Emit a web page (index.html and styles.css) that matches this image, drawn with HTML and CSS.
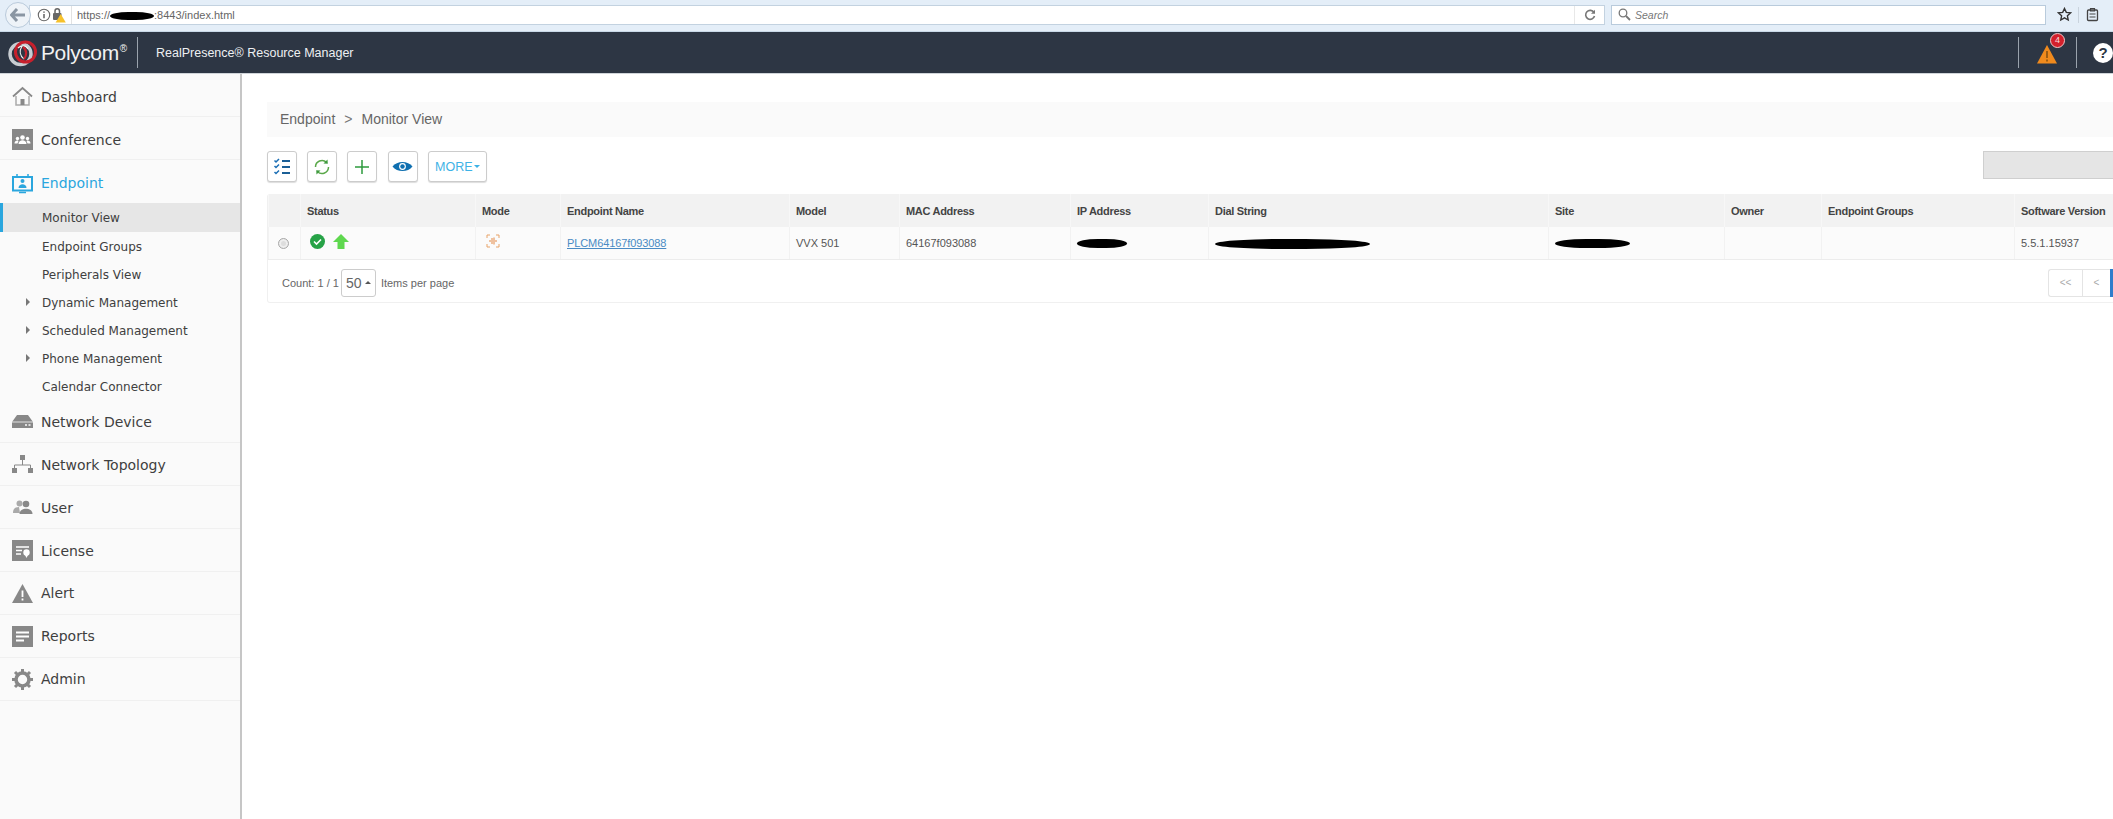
FILE: index.html
```html
<!DOCTYPE html>
<html lang="en">
<head>
<meta charset="utf-8">
<title>RealPresence Resource Manager</title>
<link rel="stylesheet" href="styles.css">
</head>
<body>
<div class="browser">
  <div class="back"><svg width="16" height="14" viewBox="0 0 16 14"><path d="M7 1 1.500 7 7 13M2 7h13" fill="none" stroke="#8a96a3" stroke-width="3"/></svg></div>
  <div class="urlbar">
    <svg class="info" width="14" height="14" viewBox="0 0 14 14"><circle cx="7" cy="7" r="5.700" fill="#fff" stroke="#666" stroke-width="1.100"/><path d="M7 6v4.200M7 3.400v1.400" stroke="#555" stroke-width="1.400"/></svg>
    <svg class="lock" width="14" height="16" viewBox="0 0 14 16"><rect x="1" y="6" width="8.500" height="7" rx="1" fill="#666"/><path d="M3 6V4a2.200 2.200 0 0 1 4.500 0v2" fill="none" stroke="#666" stroke-width="1.500"/><path d="M8.700 7 13.800 15.500H3.600Z" fill="#f6c12b"/></svg>
    <span class="urltext">https://<span class="blob blob-url"></span>:8443/index.html</span>
    <span class="reload"><svg width="12" height="12" viewBox="0 0 12 12"><path d="M10 3.500A4.500 4.500 0 1 0 10.500 7" fill="none" stroke="#777" stroke-width="1.600"/><path d="M11 .8v4H7Z" fill="#777"/></svg></span>
  </div>
  <div class="searchbar">
    <svg width="13" height="13" viewBox="0 0 13 13"><circle cx="5" cy="5" r="3.800" fill="none" stroke="#777" stroke-width="1.300"/><path d="m8 8 4 4" stroke="#777" stroke-width="1.800"/></svg>
    <span>Search</span>
  </div>
  <div class="browser-tools">
    <svg width="15" height="15" viewBox="0 0 15 15"><path d="m7.500 1.500 1.800 3.900 4.200.5-3.100 2.900.8 4.200-3.700-2.100-3.700 2.100.8-4.200L1.500 5.900l4.200-.5Z" fill="none" stroke="#333" stroke-width="1.400"/></svg>
    <i class="tool-div"></i>
    <svg width="13" height="15" viewBox="0 0 13 15"><rect x="1.500" y="3" width="10" height="10.500" rx="1" fill="none" stroke="#444" stroke-width="1.300"/><path d="M4.500 1.500h4V4h-4ZM3.500 7h6M3.500 10h6" fill="none" stroke="#444" stroke-width="1.200"/></svg>
  </div>
</div>

<header class="appbar">
  <svg class="logo" width="30" height="30" viewBox="0 0 30 30">
    <circle cx="12.500" cy="16" r="10.500" fill="none" stroke="#c9cdd2" stroke-width="3.500"/>
    <circle cx="17.500" cy="14" r="10" fill="none" stroke="#c8202c" stroke-width="3"/>
    <path d="M10 10c3-3 8-3 10 1M14 8c-3 5-2 10 2 13" fill="none" stroke="#f2f2f2" stroke-width="1.200"/>
    <path d="M15 9c4 3 4 8 1 12" fill="none" stroke="#c8202c" stroke-width="2.200"/>
  </svg>
  <span class="brand">Polycom<sup>®</sup></span>
  <i class="app-div app-div-first"></i>
  <span class="appname">RealPresence® Resource Manager</span>
  <div class="app-right">
    <i class="app-div"></i>
    <div class="alert-wrap">
      <svg width="22" height="20" viewBox="0 0 22 20"><path d="M11 1 21 19.500H1Z" fill="#f08a1d"/><path d="M11 7v7M11 15.500v2" stroke="#7a4a10" stroke-width="1.400"/></svg>
      <span class="badge">4</span>
    </div>
    <i class="app-div"></i>
    <span class="help">?</span>
  </div>
</header>

<div class="body">
  <nav class="side">
    <a class="nav-item nav-top"><svg class="nav-ic" viewBox="0 0 21 21"><path d="M1 10.500 10.500 2 20 10.500" fill="none" stroke="#888" stroke-width="1.800"/><path d="M4 10v9h13v-9" fill="none" stroke="#aaa" stroke-width="1.500"/><rect x="8.500" y="13" width="4" height="6" fill="#888"/></svg>Dashboard</a>
    <a class="nav-item nav-top"><svg class="nav-ic" viewBox="0 0 21 21"><rect width="21" height="21" fill="#888"/><circle cx="10.500" cy="8.500" r="2.300" fill="#fff"/><circle cx="5.500" cy="9.500" r="1.700" fill="#fff"/><circle cx="15.500" cy="9.500" r="1.700" fill="#fff"/><path d="M6.500 15c0-5 8-5 8 0ZM2.500 14.500c0-3 3-3.500 4-2.500l-1 2.500ZM18.500 14.500c0-3-3-3.500-4-2.500l1 2.500Z" fill="#fff"/></svg>Conference</a>
    <a class="nav-item nav-top nav-open"><svg class="nav-ic" viewBox="0 0 21 21"><rect x="1" y="4" width="19" height="13.500" fill="none" stroke="#2aa6de" stroke-width="2"/><path d="M5 1v2M16 1v2M7 19.500h7" stroke="#2aa6de" stroke-width="1.500"/><circle cx="10.500" cy="8" r="2" fill="#2aa6de"/><path d="M6.500 15c0-5 8-5 8 0Z" fill="#2aa6de"/></svg>Endpoint</a>
    <ul class="sub">
      <li class="sub-item sub-active">Monitor View</li>
      <li class="sub-item">Endpoint Groups</li>
      <li class="sub-item">Peripherals View</li>
      <li class="sub-item sub-more">Dynamic Management</li>
      <li class="sub-item sub-more">Scheduled Management</li>
      <li class="sub-item sub-more">Phone Management</li>
      <li class="sub-item">Calendar Connector</li>
    </ul>
    <a class="nav-item"><svg class="nav-ic" viewBox="0 0 21 21"><path d="M5 4h11l5 7v6H0v-6Z" fill="#888"/><path d="M0 11h21" stroke="#fafafa" stroke-width=".8"/><path d="M13 14h2M16.500 14h2" stroke="#fafafa" stroke-width="1.500"/></svg>Network Device</a>
    <a class="nav-item"><svg class="nav-ic" viewBox="0 0 21 21"><rect x="8" y="1" width="5" height="5" fill="#888"/><rect y="14" width="5" height="5" fill="#888"/><rect x="16" y="14" width="5" height="5" fill="#888"/><path d="M10.500 6v5M2.500 14v-3h16v3" fill="none" stroke="#888"/></svg>Network Topology</a>
    <a class="nav-item"><svg class="nav-ic" viewBox="0 0 21 21"><circle cx="7.500" cy="6.500" r="3" fill="#aaa"/><path d="M1 16c0-5 3-6 6-6l1 6Z" fill="#aaa"/><circle cx="14" cy="7" r="3.300" fill="#888"/><path d="M7.500 17c0-7 13-7 13 0Z" fill="#888"/></svg>User</a>
    <a class="nav-item"><svg class="nav-ic" viewBox="0 0 21 21"><rect width="21" height="21" fill="#888"/><path d="M4 7h13M4 10.500h6M4 14h5" stroke="#fff" stroke-width="1.500"/><circle cx="14.500" cy="12.500" r="3.200" fill="#fff"/><path d="M13 15h3l-1.500 3Z" fill="#fff"/></svg>License</a>
    <a class="nav-item nav-low"><svg class="nav-ic" viewBox="0 0 21 21"><path d="M10.500 1 21 20H0Z" fill="#888"/><path d="M10.500 7.500v6.500M10.500 15.500v2" stroke="#fff" stroke-width="1.800"/></svg>Alert</a>
    <a class="nav-item nav-low"><svg class="nav-ic" viewBox="0 0 21 21"><rect width="21" height="21" fill="#888"/><path d="M4 6.500h13M4 10.500h13M4 14.500h8" stroke="#fff" stroke-width="1.800"/></svg>Reports</a>
    <a class="nav-item nav-low"><svg class="nav-ic" viewBox="0 0 21 21"><circle cx="10.500" cy="10.500" r="6.500" fill="none" stroke="#888" stroke-width="3.600"/><path d="M10.500 0v4M10.500 17v4M0 10.500h4M17 10.500h4M3 3l3 3M15 15l3 3M18 3l-3 3M6 15l-3 3" stroke="#888" stroke-width="3"/></svg>Admin</a>
  </nav>

  <main class="main">
    <div class="content">
      <div class="crumb">Endpoint<span class="crumb-sep">&gt;</span>Monitor View</div>
      <div class="toolbar">
        <button class="tbtn"><svg width="18" height="18" viewBox="0 0 18 18"><path d="m1.500 2.500 1.500 1.500L6 1M1.500 8l1.500 1.500L6 6.500M1.500 14l1.500 1.500L6 12.500" fill="none" stroke="#1b6fb5" stroke-width="1.500"/><path d="M9 3h8M9 9h8M9 15h8" stroke="#1b5f96" stroke-width="1.800"/></svg></button>
        <button class="tbtn"><svg width="18" height="18" viewBox="0 0 18 18"><path d="M2.500 9a6.500 6.500 0 0 1 11-4.700M15.500 9a6.500 6.500 0 0 1-11 4.700" fill="none" stroke="#5aa84a" stroke-width="1.500"/><path d="m14.500 1.500.3 4.300-4.300-.3ZM3.500 16.500l-.3-4.300 4.300.3Z" fill="#3f9a3f"/></svg></button>
        <button class="tbtn"><svg width="16" height="16" viewBox="0 0 16 16"><path d="M8 1v14M1 8h14" stroke="#2e9a3e" stroke-width="1.500"/></svg></button>
        <button class="tbtn"><svg width="21" height="13" viewBox="0 0 21 13"><path d="M.5 6.500C5 .5 16 .5 20.500 6.500 16 12.500 5 12.500 .5 6.500Z" fill="#0f6fb0"/><circle cx="10.500" cy="6.500" r="3.400" fill="#fff"/><circle cx="10.500" cy="6.500" r="2.200" fill="#0f6fb0"/></svg></button>
        <button class="tbtn tbtn-more">MORE<span class="caret"></span></button>
        <div class="filter-box"></div>
      </div>
      <div class="panel">
        <table class="grid">
          <thead>
            <tr>
              <th class="c-sel"></th><th class="c-status">Status</th><th class="c-mode">Mode</th><th class="c-name">Endpoint Name</th><th class="c-model">Model</th><th class="c-mac">MAC Address</th><th class="c-ip">IP Address</th><th class="c-dial">Dial String</th><th class="c-site">Site</th><th class="c-owner">Owner</th><th class="c-groups">Endpoint Groups</th><th class="c-ver">Software Version</th>
            </tr>
          </thead>
          <tbody>
            <tr>
              <td class="cell-sel"><span class="radio"></span></td>
              <td><span class="status-icons">
                <svg width="15" height="15" viewBox="0 0 15 15"><circle cx="7.500" cy="7.500" r="7.500" fill="#27a347"/><path d="m4 7.500 2.500 2.500L11 5.500" fill="none" stroke="#fff" stroke-width="1.600"/></svg>
                <svg width="16" height="15" viewBox="0 0 16 15"><path d="M8 0 16 8H11.500V15H4.500V8H0Z" fill="#5fd84f"/></svg>
              </span></td>
              <td class="cell-mode"><svg width="14" height="14" viewBox="0 0 14 14"><path d="M1 4V1h3M10 1h3v3M13 10v3h-3M4 13H1v-3" fill="none" stroke="#e8a368" stroke-width="1"/><path d="M4 6v2M6 4v6M8 3.500v7M10 6v2" stroke="#e07a30" stroke-width=".9"/></svg></td>
              <td><a class="ep-link">PLCM64167f093088</a></td>
              <td>VVX 501</td>
              <td>64167f093088</td>
              <td><span class="blob blob-ip"></span></td>
              <td><span class="blob blob-dial"></span></td>
              <td><span class="blob blob-site"></span></td>
              <td></td>
              <td></td>
              <td>5.5.1.15937</td>
            </tr>
          </tbody>
        </table>
        <div class="foot">
          <div class="foot-left">
            <span>Count: 1 / 1</span>
            <span class="perpage">50<span class="caret-up"></span></span>
            <span>Items per page</span>
          </div>
          <div class="pager">
            <span class="page">&lt;&lt;</span><span class="page page-narrow">&lt;</span><span class="page page-cur"></span>
          </div>
        </div>
      </div>
    </div>
  </main>
</div>
</body>
</html>
```
FILE: styles.css
```css
* { box-sizing: border-box; }
html, body { margin: 0; height: 100%; overflow: hidden; background: #fff; }
body { font-family: "Liberation Sans", Arial, sans-serif; display: flex; flex-direction: column; height: 819px; }

.browser { height: 32px; flex: none; display: flex; align-items: center; background: #e4eef8; border-bottom: 1px solid #c9d9e8; padding: 0 0 2px 5px; position: relative; }
.back { width: 26px; height: 26px; border-radius: 50%; background: #eef3f8; border: 1px solid #b9cadb; display: flex; align-items: center; justify-content: center; flex: none; z-index: 1; }
.urlbar { margin-left: -2px; width: 1576px; height: 20px; background: #fff; border: 1px solid #c3d2e0; display: flex; align-items: center; padding-left: 6px; flex: none; }
.info { flex: none; margin-left: 1px; }
.lock { flex: none; margin-left: 1px; }
.urltext { font-size: 11px; color: #666; margin-left: 5px; padding-left: 5px; border-left: 1px solid #e2e2e2; line-height: 18px; white-space: nowrap; }
.blob { display: inline-block; background: #000; border-radius: 50%/60%; vertical-align: middle; }
.blob-url { width: 44px; height: 8px; }
.reload { margin-left: auto; width: 30px; height: 18px; border-left: 1px solid #e8e8e8; display: flex; align-items: center; justify-content: center; }
.searchbar { margin-left: 6px; width: 435px; height: 20px; background: #fff; border: 1px solid #b9cbdc; display: flex; align-items: center; padding-left: 6px; gap: 4px; font-size: 10.500px; font-style: italic; color: #777; flex: none; }
.browser-tools { display: flex; align-items: center; margin-left: 11px; }
.tool-div { width: 1px; height: 16px; background: #c9d3dd; margin: 0 7px 0 6px; }

.appbar { height: 42px; flex: none; background: #2d3644; display: flex; align-items: center; padding-left: 8px; color: #fff; border-bottom: 1px solid #cfd4d9; }
.logo { flex: none; }
.brand { font-size: 21px; margin-left: 3px; letter-spacing: -.4px; color: #f2f2f2; width: 92px; white-space: nowrap; }
.brand sup { font-size: 10px; vertical-align: 8px; line-height: 0; margin-left: 1px; }
.app-div { width: 1px; height: 31px; background: #9aa3ad; flex: none; display: block; }
.app-div-first { margin-left: 4px; }
.appname { font-size: 12.500px; margin-left: 18px; color: #eef0f2; white-space: nowrap; }
.app-right { margin-left: auto; display: flex; align-items: center; width: 95px; flex: none; }
.alert-wrap { width: 57px; position: relative; display: flex; justify-content: center; padding-right: 1px; padding-top: 2px; flex: none; }
.badge { position: absolute; left: 31px; top: -9px; width: 15px; height: 15px; border-radius: 50%; background: #d3202c; border: 1px solid #f0c9c9; color: #f5dcdc; font-size: 9px; line-height: 13px; text-align: center; }
.help { margin-left: 16px; width: 20px; height: 20px; border-radius: 50%; background: #fff; color: #2d3644; font-weight: bold; font-size: 15px; line-height: 20px; text-align: center; flex: none; }

.body { flex: 1; display: flex; min-height: 0; }
.side { width: 242px; flex: none; background: #fafafa; border-right: 2px solid #c6c6c6; }
.nav-item { height: 43px; display: flex; align-items: center; padding: 1px 0 0 12px; font-family: "DejaVu Sans", Verdana, sans-serif; font-size: 14px; color: #3f3f3f; border-bottom: 1px solid #f0f0f0; }
.nav-top { padding-top: 3px; }
.nav-low { padding-top: 0; }
.nav-ic { width: 21px; height: 21px; flex: none; margin-right: 8px; }
.nav-open { color: #2aa6de; border-bottom: 0; }
.sub { list-style: none; margin: 0; padding: 0; }
.sub-item { height: 28px; line-height: 30px; padding-left: 42px; font-family: "DejaVu Sans", Verdana, sans-serif; font-size: 12px; color: #404040; position: relative; }
.sub-active { height: 29px; line-height: 30px; background: #e6e6e6; border-left: 3px solid #2aa6de; padding-left: 39px; }
.sub-more::before { content: ""; position: absolute; left: 26px; top: 10px; border-left: 4px solid #777; border-top: 4px solid transparent; border-bottom: 4px solid transparent; }

.main { flex: 1; min-width: 0; overflow: hidden; background: #fff; padding: 28px 0 0 25px; }
.content { width: 1886px; }
.crumb { height: 35px; line-height: 35px; background: #fafafa; padding-left: 13px; font-size: 14px; color: #666; }
.crumb-sep { margin: 0 9px; color: #777; }
.toolbar { display: flex; gap: 10.200px; margin-top: 14px; align-items: flex-start; height: 31px; }
.tbtn { width: 30px; height: 31px; padding: 0; background: #fff; border: 1px solid #ccc; border-radius: 3px; box-shadow: 0 1px 1px #ddd; display: flex; align-items: center; justify-content: center; font-family: "Liberation Sans", Arial, sans-serif; }
.tbtn-more { width: 59px; color: #3db2e6; font-size: 12.500px; }
.caret { display: inline-block; border-top: 3px solid #3db2e6; border-left: 3px solid transparent; border-right: 3px solid transparent; margin-left: 1px; }
.filter-box { margin-left: auto; width: 170px; height: 28px; background: #e5e5e5; border: 1px solid #cfcfcf; }

.panel { margin-top: 12px; border: 1px solid #f0f0f0; border-top: 0; border-radius: 3px; }
.grid { width: 100%; table-layout: fixed; border-collapse: collapse; font-size: 11px; }
.grid th { height: 33px; background: #f2f2f2; text-align: left; font-weight: bold; color: #444; padding: 1px 0 0 6px; border-left: 1px solid #f7f7f7; letter-spacing: -.3px; white-space: nowrap; }
.grid td { height: 32px; background: #fbfbfb; color: #555; padding: 0 0 0 6px; border-left: 1px solid #f2f2f2; border-bottom: 1px solid #ececec; }
.c-sel { width: 32px; }
.c-status { width: 175px; }
.c-mode { width: 85px; }
.c-name { width: 229px; }
.c-model { width: 110px; }
.c-mac { width: 171px; }
.c-ip { width: 138px; }
.c-dial { width: 340px; }
.c-site { width: 176px; }
.c-owner { width: 97px; }
.c-groups { width: 193px; }
.c-ver { width: 140px; }
.grid .cell-sel { padding: 0 0 0 9px; }
.radio { display: block; width: 11px; height: 11px; border-radius: 50%; background: #ddd; border: 1px solid #aaa; box-shadow: inset 0 0 0 2px #eee; margin-top: 2px; }
.status-icons { display: flex; gap: 8px; padding-left: 3px; margin-top: -3px; }
.cell-mode svg { display: block; margin: -3px 0 0 4px; }
.ep-link { color: #4a8bc4; text-decoration: underline; letter-spacing: -.1px; }
.blob-ip { width: 50px; height: 9px; margin-left: 0; }
.blob-dial { width: 155px; height: 10px; }
.blob-site { width: 75px; height: 9px; }

.foot { height: 42px; padding-top: 4px; display: flex; align-items: center; justify-content: space-between; font-size: 11px; color: #666; }
.foot-left { display: flex; align-items: center; padding-left: 14px; }
.perpage { margin: 0 5px 0 2px; width: 35px; height: 28px; border: 1px solid #ccc; border-radius: 3px; font-size: 14px; display: flex; align-items: center; justify-content: center; gap: 3px; }
.caret-up { border-bottom: 3px solid #555; border-left: 3px solid transparent; border-right: 3px solid transparent; }
.pager { display: flex; height: 28px; }
.page { width: 34px; border: 1px solid #e4e4e4; border-right: 0; color: #aaa; font-size: 10px; display: flex; align-items: center; justify-content: center; border-radius: 3px 0 0 3px; }
.page-narrow { width: 28px; border-radius: 0; }
.page-cur { width: 42px; background: #2f7dcb; border: 0; border-radius: 0; }
```
